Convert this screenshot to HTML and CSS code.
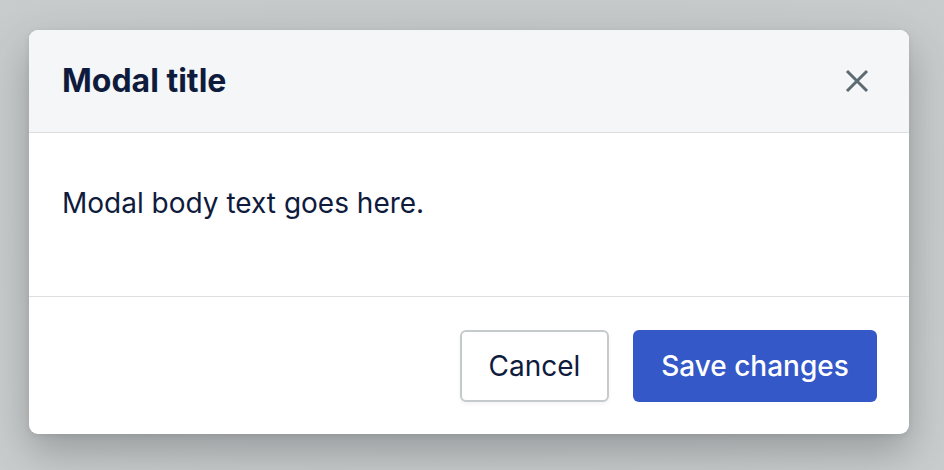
FILE: index.html
```html
<!DOCTYPE html>
<html lang="en">
<head>
<meta charset="utf-8">
<title>Modal</title>
<link rel="stylesheet" href="styles.css">
</head>
<body>
  <div class="modal">
    <div class="modal-header">
      <h2 class="modal-title">Modal title</h2>
      <button class="close" aria-label="Close">
        <svg width="24" height="24" viewBox="0 0 24 24"><path d="M2 2 L22 22 M22 2 L2 22" stroke="#5d6a72" stroke-width="3" fill="none"/></svg>
      </button>
    </div>
    <div class="modal-body">
      <p>Modal body text goes here.</p>
    </div>
    <div class="modal-footer">
      <button class="btn btn-secondary">Cancel</button>
      <button class="btn btn-primary">Save changes</button>
    </div>
  </div>
</body>
</html>
```
FILE: styles.css
```css
html, body {
  margin: 0;
  padding: 0;
}
body {
  width: 944px;
  height: 470px;
  background: radial-gradient(ellipse at 50% 40%, #c3c7c8 0%, #c6cacb 60%, #cacdce 100%);
  font-family: Inter, "Noto Sans", sans-serif;
  color: #0f1b3d;
  padding: 30px 35px 0 29px;
  box-sizing: border-box;
}
.modal {
  width: 880px;
  background: #fff;
  border-radius: 9px;
  overflow: hidden;
  box-shadow: 0 18px 40px rgba(60, 66, 70, 0.35), 0 2px 6px rgba(0,0,0,0.08);
}
.modal-header {
  height: 103px;
  box-sizing: border-box;
  background: #f4f6f7;
  border-bottom: 1px solid #dcdfe1;
  display: flex;
  align-items: center;
  justify-content: space-between;
  padding: 0 40px 0 33px;
}
.modal-title {
  margin: 0;
  font-size: 32px;
  font-weight: 700;
  line-height: 40px;
  color: #0f1b3d;
}
.close {
  background: none;
  border: 0;
  padding: 0;
  width: 24px;
  height: 24px;
  display: flex;
  cursor: pointer;
}
.modal-body {
  padding: 52px 33px 75px;
  border-bottom: 1px solid #dcdfe1;
}
.modal-body p {
  margin: 0;
  font-size: 28px;
  line-height: 36px;
}
.modal-footer {
  display: flex;
  justify-content: flex-end;
  gap: 24px;
  padding: 33px 32px 32px;
}
.btn {
  height: 72px;
  font-family: Inter, "Noto Sans", sans-serif;
  font-size: 28px;
  border-radius: 6px;
  box-sizing: border-box;
  padding: 0;
  cursor: pointer;
}
.btn-secondary {
  width: 149px;
  background: #fff;
  border: 2px solid #c5cacc;
  color: #0f1b3d;
  font-weight: 400;
  box-shadow: 0 2px 4px rgba(0,0,0,0.05);
}
.btn-primary {
  width: 244px;
  background: #3558c8;
  border: 0;
  color: #fff;
  font-weight: 500;
}
```
